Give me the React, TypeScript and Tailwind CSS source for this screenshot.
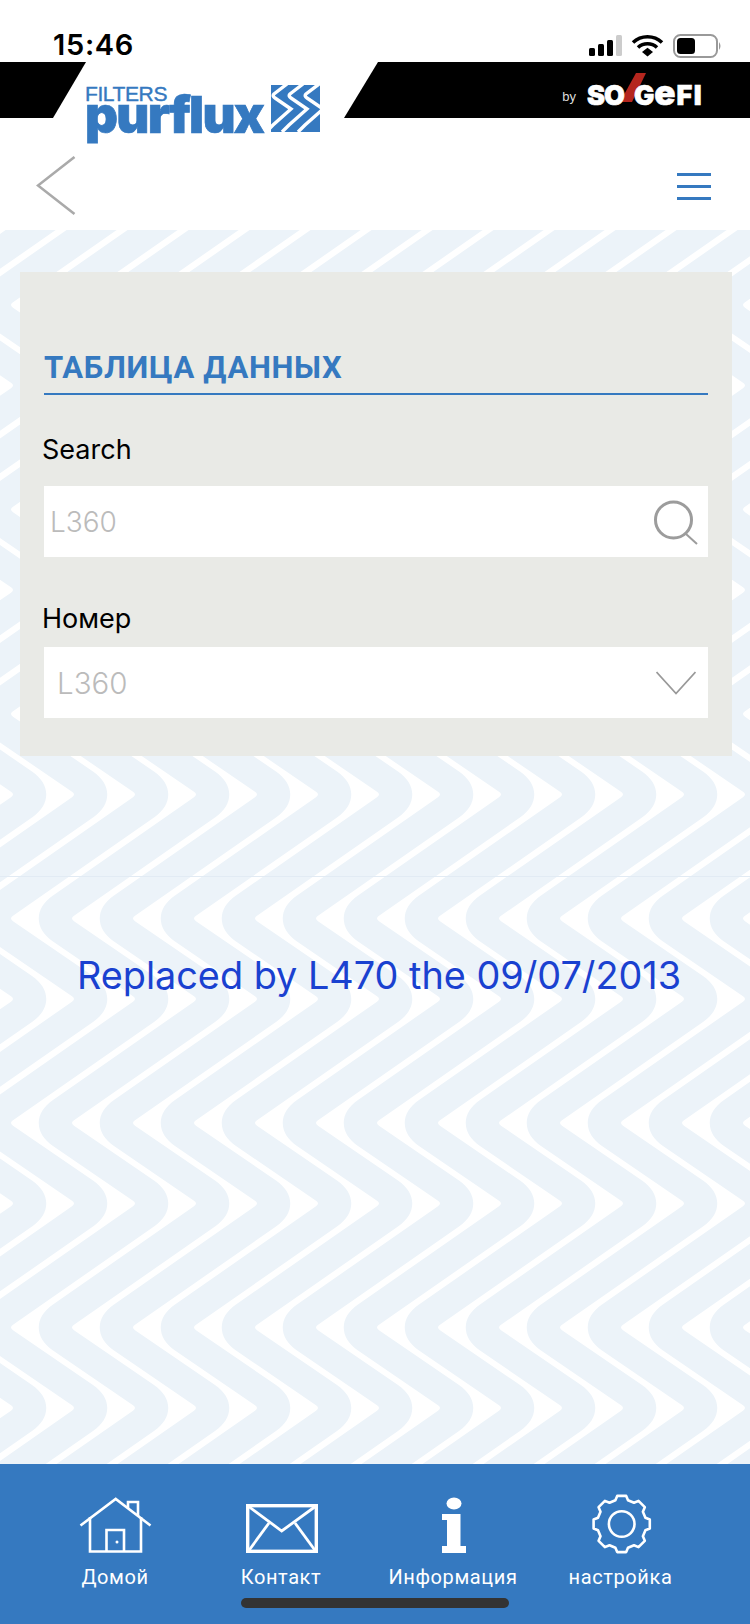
import React from "react";

const BLUE = "#3579c0";

// white zigzag strips of the background, one closed shape per strip
function stripPath(x: number) {
  const down: string[] = [];
  const up: string[] = [];
  const t = 10;
  for (let m = -3; m <= 4; m++) {
    const rx = x - 61 * m;
    const ry = 794.5 + 204.5 * m;
    const lx = rx - 179;
    const ly = ry + 124;
    down.push(`L${rx - 4} ${ry - 2.7} Q${rx} ${ry} ${rx - 4} ${ry + 2.7}`);
    down.push(`L${lx + 34} ${ly - 23} C${lx + 15} ${ly - 10.2} ${lx + 15} ${ly + 10.2} ${lx + 34} ${ly + 23}`);
    up.unshift(`L${rx - t - 34} ${ry + 23} C${rx - t - 15} ${ry + 10.2} ${rx - t - 15} ${ry - 10.2} ${rx - t - 34} ${ry - 23}`);
    up.unshift(`L${lx - t + 4} ${ly + 2.7} Q${lx - t} ${ly} ${lx - t + 4} ${ly - 2.7}`);
  }
  return "M" + down.join(" ").slice(1) + " " + up.join(" ") + " Z";
}

const stripes = Array.from({ length: 31 }, (_, i) => stripPath(15 + 61 * (i - 6))).join(" ");

function gearPath(cx: number, cy: number) {
  const pts: string[] = [];
  for (let i = 0; i < 8; i++) {
    const a = i * 45 - 90;
    [[24.5, a - 15], [28.5, a - 9], [28.5, a + 9], [24.5, a + 15]].forEach(([r, d]) => {
      const rad = (d * Math.PI) / 180;
      pts.push(`${(cx + r * Math.cos(rad)).toFixed(1)} ${(cy + r * Math.sin(rad)).toFixed(1)}`);
    });
  }
  return "M" + pts.join(" L") + " Z";
}

function StatusBar() {
  return (
    <div className="relative flex h-[62px] items-end justify-between bg-white pl-[53px] pr-[28px]">
      <span className="font-['Inter',sans-serif] text-[29px] leading-[34px] font-semibold tracking-[0.7px] text-black">15:46</span>
      <svg width="134" height="24" viewBox="0 0 134 24" className="mb-[4px]">
        <rect x="1" y="14" width="6" height="8" rx="1.5" fill="#000" />
        <rect x="10" y="10" width="6" height="12" rx="1.5" fill="#000" />
        <rect x="19" y="6" width="6" height="16" rx="1.5" fill="#000" />
        <rect x="28" y="1" width="6" height="21" rx="1.5" fill="#ccc" />
        <path d="M45 8.5 A21 21 0 0 1 74 8.5" fill="none" stroke="#000" strokeWidth="3.6" />
        <path d="M50 13.5 A14 14 0 0 1 69 13.5" fill="none" stroke="#000" strokeWidth="3.6" />
        <path d="M54 18 L59.5 13.8 L65 18 L59.5 22.5 Z" fill="#000" />
        <rect x="86" y="1" width="43" height="22" rx="6.5" fill="none" stroke="#999" strokeWidth="2" />
        <rect x="89" y="4" width="18" height="16" rx="3.5" fill="#000" />
        <path d="M131 8 Q134 12 131 16 Z" fill="#999" />
      </svg>
    </div>
  );
}

function PurfluxLogo() {
  return (
    <div className="absolute left-[85px] top-[23px] h-[58px] w-[236px]">
      <div className="font-['Liberation_Sans',sans-serif] text-[21px] leading-[17px] tracking-[-0.4px] text-[#3579c0] [-webkit-text-stroke:0.4px_#3579c0]">
        FILTERS
      </div>
      <div className="-mt-[17px] font-['Inter',sans-serif] text-[51px] leading-[60px] font-black tracking-[-1.7px] text-[#3579c0] [-webkit-text-stroke:0.7px_#3579c0]">
        purflux
      </div>
      <svg width="49" height="47" viewBox="0 0 49 47" className="absolute left-[186px] top-0">
        <rect width="49" height="47" fill={BLUE} />
        <g fill="none" stroke="#fff" strokeWidth="3.4">
          <path d="M16 -1 L3 9 Q1 11 4 13 L20 24 L2 40 L-5 47" />
          <path d="M32 -1 L19 9 Q17 11 20 13 L36 24 L18 40 L11 47" />
          <path d="M48 -1 L35 9 Q33 11 36 13 L52 24 L34 40 L27 47" />
        </g>
      </svg>
    </div>
  );
}

function TopBand() {
  return (
    <div className="relative flex h-[56px] justify-between bg-white">
      <div className="h-full w-[86px] bg-black [clip-path:polygon(0_0,100%_0,53px_100%,0_100%)]" />
      <div className="flex h-full w-[406px] items-center justify-end bg-black pr-[48px] [clip-path:polygon(34px_0,100%_0,100%_100%,0_100%)]">
        <span className="mr-[11px] mt-[14px] font-['Liberation_Sans',sans-serif] text-[13px] text-[#ddd]">by</span>
        <div className="relative mt-[4px] flex h-[20px] w-[115px] items-baseline font-['Inter',sans-serif] text-[27px] leading-[20px] font-black text-white [-webkit-text-stroke:0.6px_#fff]">
          <svg width="26" height="29" viewBox="0 0 26 29" className="absolute left-[33px] top-[-9px]">
            <path d="M16 0 L26 0 L12 29 L0 29 Z" fill="#b5261e" />
          </svg>
          <span className="relative tracking-[-1px]">SO</span>
          <span className="relative ml-[10px]">G</span>
          <span className="relative text-[35px]">e</span>
          <span className="relative ml-[1px] tracking-[1.5px]">FI</span>
        </div>
      </div>
      <PurfluxLogo />
    </div>
  );
}

function NavRow() {
  return (
    <div className="flex h-[112px] items-center justify-between bg-white pl-[36px] pr-[39px] pt-[24px]">
      <svg width="40" height="60" viewBox="0 0 40 60">
        <path d="M38.5 1 L2 29.5 L38.5 58" fill="none" stroke="#aaa" strokeWidth="2.6" />
      </svg>
      <div className="flex w-[34px] flex-col gap-[9px]">
        <div className="h-[3px] bg-[#3579c0]" />
        <div className="h-[3px] bg-[#3579c0]" />
        <div className="h-[3px] bg-[#3579c0]" />
      </div>
    </div>
  );
}

function Card() {
  return (
    <div className="relative ml-[20px] mr-[18px] mt-[42px] h-[484px] bg-[#e9eae6] px-[24px] font-['Inter',sans-serif]">
      <div className="border-b-2 border-[#3579c0] pt-[76px] pb-[6px] font-['Roboto',sans-serif] text-[31px] leading-[39px] font-bold tracking-[0.7px] text-[#3579c0]">
        ТАБЛИЦА ДАННЫХ
      </div>
      <div className="-ml-[2px] mt-[38px] text-[27px] leading-[34px] text-black">Search</div>
      <div className="mt-[19px] flex h-[71px] items-center justify-between bg-white pl-[6px] pr-[9px]">
        <span className="text-[28px] leading-[34px] font-light text-[#bbb]">L360</span>
        <svg width="46" height="46" viewBox="0 0 46 46" className="mt-[2px]">
          <circle cx="20.5" cy="20" r="18" fill="none" stroke="#9c9c9c" strokeWidth="3" />
          <path d="M33 34 L44 44" fill="none" stroke="#9c9c9c" strokeWidth="2" />
        </svg>
      </div>
      <div className="-ml-[2px] mt-[45px] text-[27px] leading-[34px] text-black">Номер</div>
      <div className="mt-[11px] flex h-[71px] items-center justify-between bg-white pl-[13px] pr-[12px]">
        <span className="text-[29.5px] leading-[34px] font-light text-[#bbb]">L360</span>
        <svg width="40" height="24" viewBox="0 0 40 24" className="mb-[-1px]">
          <path d="M0.5 1 L20 22.5 L39.5 1" fill="none" stroke="#999" strokeWidth="1.8" />
        </svg>
      </div>
    </div>
  );
}

function Main() {
  return (
    <div className="relative flex-1 overflow-hidden bg-[#ecf3f9]">
      {/* wave background */}
      <svg width="750" height="1234" viewBox="0 230 750 1234" className="absolute inset-0">
        <path d={stripes} fill="#fff" />
        <path d="M0 876.5 H750" stroke="#e2ebf4" strokeWidth="1" />
      </svg>
      <div className="relative">
        <Card />
        <div className="mt-[196px] pl-[8px] text-center font-['Inter',sans-serif] text-[37.8px] leading-[46px] text-[#1a41d0]">
          Replaced by L470 the 09/07/2013
        </div>
      </div>
    </div>
  );
}

function Footer() {
  return (
    <div className="relative h-[160px] bg-[#3579c0] pl-[31px] pt-[32px]">
      <div className="flex font-['Roboto',sans-serif] text-[20px] leading-[24px] tracking-[0.6px] text-white">
        <div className="flex w-[168px] flex-col items-center">
          <svg width="74" height="58" viewBox="78 1495 74 58">
            <g fill="none" stroke="#fff" strokeWidth="2.6">
              <path d="M80.5 1524.5 L115.7 1498 L150.5 1524.5" />
              <path d="M90 1516 V1550.5 H141 V1516" />
              <path d="M106.5 1550 V1529 H124 V1550" />
              <path d="M128 1507 V1501 H138 V1515" />
            </g>
            <circle cx="117" cy="1541" r="1.5" fill="#fff" />
          </svg>
          <span className="mt-[11px]">Домой</span>
        </div>
        <div className="flex w-[164px] flex-col items-center">
          <svg width="74" height="58" viewBox="244 1495 74 58">
            <rect x="247.7" y="1504.7" width="68.6" height="45.6" fill="none" stroke="#fff" strokeWidth="3.4" />
            <g fill="none" stroke="#fff" strokeWidth="2.8">
              <path d="M248 1505 L281.7 1530 L316 1505" />
              <path d="M269 1522 L248.5 1550" />
              <path d="M295 1522 L315.5 1550" />
            </g>
          </svg>
          <span className="mt-[11px]">Контакт</span>
        </div>
        <div className="flex w-[180px] flex-col items-center">
          <svg width="74" height="58" viewBox="416 1495 74 58">
            <ellipse cx="454" cy="1502.5" rx="7.5" ry="6" fill="#fff" />
            <path d="M442 1513 H460.5 V1545 H466 V1552 H442 V1545 H447 V1519 H442 Z" fill="#fff" />
          </svg>
          <span className="mt-[11px]">Информация</span>
        </div>
        <div className="flex w-[155px] flex-col items-center">
          <svg width="74" height="58" viewBox="584 1495 74 58" className="overflow-visible">
            <path d={gearPath(621.7, 1523)} fill="none" stroke="#fff" strokeWidth="2.6" strokeLinejoin="round" />
            <circle cx="621.7" cy="1523" r="12.8" fill="none" stroke="#fff" strokeWidth="2.6" />
          </svg>
          <span className="mt-[11px]">настройка</span>
        </div>
      </div>
      <div className="absolute bottom-[16px] left-[241px] h-[10px] w-[268px] rounded-full bg-[#333]" />
    </div>
  );
}

export default function App() {
  return (
    <div className="flex h-[1624px] w-[750px] flex-col overflow-hidden bg-white">
      <StatusBar />
      <TopBand />
      <NavRow />
      <Main />
      <Footer />
    </div>
  );
}
